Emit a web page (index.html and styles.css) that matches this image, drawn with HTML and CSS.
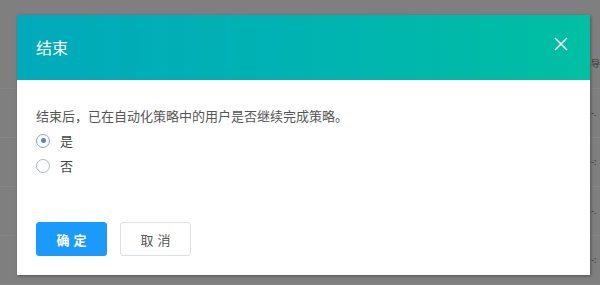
FILE: index.html
```html
<!DOCTYPE html>
<html lang="zh-CN">
<head>
<meta charset="utf-8">
<title>结束</title>
<link rel="stylesheet" href="styles.css">
</head>
<body>
<div class="backdrop">
  <div class="bg-rows">
    <div class="bg-row"><span class="frag">导</span></div>
    <div class="bg-row"><span class="frag">-.</span></div>
    <div class="bg-row"><span class="frag">-:</span></div>
    <div class="bg-row"><span class="frag">-.</span></div>
    <div class="bg-row"><span class="frag">-:</span></div>
  </div>
  <div class="modal">
    <div class="modal-header">
      <span class="modal-title">结束</span>
      <svg class="close" width="14" height="14" viewBox="0 0 14 14"><path d="M1 1 L13 13 M13 1 L1 13" stroke="#fff" stroke-width="1.5" fill="none"/></svg>
    </div>
    <div class="modal-body">
      <p class="question">结束后，已在自动化策略中的用户是否继续完成策略。</p>
      <label class="radio"><span class="dot checked"></span><span>是</span></label>
      <label class="radio"><span class="dot"></span><span>否</span></label>
    </div>
    <div class="modal-footer">
      <button class="btn primary">确定</button>
      <button class="btn">取消</button>
    </div>
  </div>
</div>
</body>
</html>
```

FILE: styles.css
```css
html, body {
  margin: 0;
  padding: 0;
}
body {
  width: 600px;
  height: 285px;
  overflow: hidden;
  background: #7f7f7f;
  font-family: "Noto Sans CJK SC", "Noto Sans", sans-serif;
}
.backdrop {
  position: relative;
  width: 600px;
  height: 285px;
}
.bg-rows {
  position: absolute;
  inset: 0;
  display: flex;
  flex-direction: column;
  padding-top: 40px;
}
.bg-row {
  height: 54px;
  border-bottom: 1px solid #868686;
  display: flex;
  justify-content: flex-end;
  align-items: center;
}
.frag {
  font-size: 9px;
  line-height: 10px;
  color: #333;
  width: 9px;
}
.modal {
  position: absolute;
  left: 17px;
  top: 15px;
  width: 573px;
  height: 260px;
  background: #fff;
  box-shadow: 1px 1px 3px rgba(0,0,0,0.35);
  display: flex;
  flex-direction: column;
}
.modal-header {
  height: 65px;
  flex: none;
  background: linear-gradient(90deg, #00aabb 0%, #00b3b2 50%, #00bfa2 100%);
  display: flex;
  align-items: center;
  justify-content: space-between;
  padding: 0 22px 0 19px;
  box-sizing: border-box;
}
.modal-title {
  color: #fff;
  font-size: 16px;
  position: relative;
  top: -1px;
}
.close {
  position: relative;
  top: -4px;
}
.modal-body {
  padding: 25px 19px 0;
  flex: 1;
}
.question {
  margin: 0 0 1px;
  font-size: 13px;
  line-height: 22px;
  color: #555;
}
.radio {
  display: flex;
  align-items: center;
  height: 25px;
  font-size: 13px;
  color: #444;
}
.dot {
  width: 12px;
  height: 12px;
  border: 1px solid #a9b6c8;
  border-radius: 50%;
  margin-right: 10px;
  box-sizing: content-box;
  display: flex;
  align-items: center;
  justify-content: center;
}
.dot.checked {
  border-color: #8da2bf;
}
.dot.checked::after {
  content: "";
  width: 5px;
  height: 5px;
  border-radius: 50%;
  background: #5b86c2;
}
.modal-footer {
  display: flex;
  gap: 13px;
  padding: 0 19px 19px;
}
.btn {
  width: 71px;
  height: 34px;
  border: 1px solid #dcdfe6;
  border-radius: 3px;
  background: #fff;
  color: #555;
  font-family: inherit;
  font-size: 13px;
  letter-spacing: 4px;
  text-indent: 4px;
  padding: 0;
}
.btn.primary {
  background: #1a9bfc;
  border-color: #1a9bfc;
  color: #fff;
  font-weight: bold;
}
```
